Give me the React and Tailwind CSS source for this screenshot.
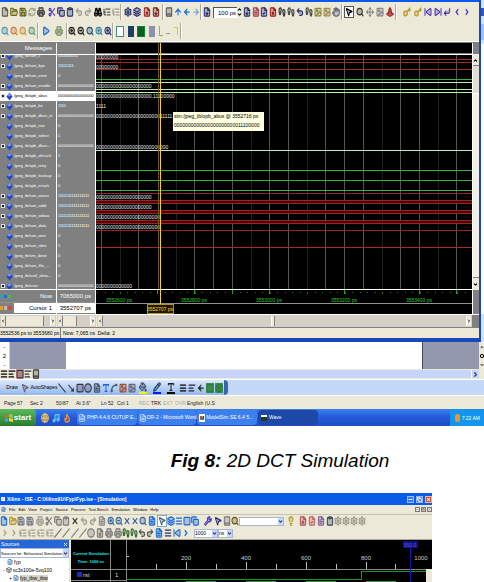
import {
  File, FolderOpen, Save, RefreshCw, Printer, Scissors, Copy, Clipboard, Undo2, Redo2, Binoculars, ListTree,
  Book, ArrowUp, ArrowLeft, ArrowRight, FileText, FileDown, FileX, FileCheck, Hand, MousePointer2, ZoomIn, ZoomOut,
  Search, Layers, TrafficCone, Key, ChevronLeft, ChevronRight, ChevronDown, ChevronUp, Circle, Square, Minus, X,
  Image, PaintBucket, Pencil, Menu, Type, Wrench, Lightbulb, Box, Move, Footprints, Globe, Flame, Music, Play,
  AlignLeft, Spline, SkipBack, SkipForward, CornerDownLeft, Slash, MoveDownRight, Settings,
} from "lucide-react";

const signals = [
  { name: "/jpeg_tb/ram_c", value: "000000000", expand: true },
  { name: "/jpeg_tb/ram_byn", value: "11111111", expand: true },
  { name: "/jpeg_tb/ram_error", value: "0" },
  { name: "/jpeg_tb/ram_enable", value: "0000000000000000", expand: true },
  { name: "/jpeg_tb/opb_abus", value: "0000000000000000", expand: true, selected: true },
  { name: "/jpeg_tb/opb_be", value: "1111", expand: true },
  { name: "/jpeg_tb/opb_dbus_in", value: "0000000000000000", expand: true },
  { name: "/jpeg_tb/opb_rnw", value: "0" },
  { name: "/jpeg_tb/opb_select", value: "1" },
  { name: "/jpeg_tb/opb_dbus...", value: "0000000000000000", expand: true },
  { name: "/jpeg_tb/opb_xferack", value: "1" },
  { name: "/jpeg_tb/opb_retry", value: "0" },
  { name: "/jpeg_tb/opb_toutsup", value: "0" },
  { name: "/jpeg_tb/opb_errack", value: "0" },
  { name: "/jpeg_tb/ram_waver", value: "1111111111111111", expand: true },
  { name: "/jpeg_tb/ram_addr", value: "1111111111111111", expand: true },
  { name: "/jpeg_tb/ram_wdata", value: "1111111111111111", expand: true },
  { name: "/jpeg_tb/ram_data", value: "1111111111111111", expand: true },
  { name: "/jpeg_tb/ram_wen", value: "0" },
  { name: "/jpeg_tb/ram_rden", value: "1" },
  { name: "/jpeg_tb/sim_done", value: "0" },
  { name: "/jpeg_tb/ram_fifo_...", value: "0" },
  { name: "/jpeg_tb/outif_almo...", value: "0" },
  { name: "/jpeg_tb/error", value: "0000000000000000", expand: true },
];

const gridLines = [101, 138, 194, 213, 232, 269, 288, 325, 344, 363, 400, 419, 456];
const dimLines = [120, 158, 176, 251, 307, 382, 438];

const waves = [
  [59, "#a52a2a"], [62, "#a52a2a"], [69, "#a52a2a"], [79, "#38b438"], [82, "#b8f0b0"], [89, "#b8f0b0"], [92, "#b8f0b0"],
  [150, "#c4ecc0"], [170, "#38b438"], [180, "#38b438"], [190, "#38b438"],
  [193, "#9c2424"], [200, "#9c2424"], [203, "#9c2424"], [210, "#9c2424"], [213, "#9c2424"], [220, "#9c2424"],
  [223, "#9c2424"], [230, "#9c2424"], [247, "#b02828"],
];

const buses = [
  [59, "00000000"], [69, "00000000"], [88, "00000000000000000000"], [98, "00000000000000000000.11100000"],
  [108, "1111"], [118, "0000000000000000000000011111"], [149, "00000000000000000000000000"], [199, "00000000000000000000"],
  [209, "00000000000000000000"], [219, "00000000000000000000000"], [229, "00000000000000000000000"], [288, "0000000000000"],
];

const labels = [
  [119, "3552600 ps"], [194, "3552800 ps"], [269, "3553000 ps"], [344, "3553200 ps"], [419, "3553400 ps"],
];

const Tools = ({ items, className }) => (
  <div className={`flex shrink-0 items-center justify-around ${className}`}>
    {items.map(([Icon, color], i) => (
      <button key={i} type="button" aria-label={`Tool ${i + 1}`} className={color}>
        <Icon className="w-2 h-[10px]" strokeWidth={3} fill="currentColor" fillOpacity={0.3} preserveAspectRatio="none" />
      </button>
    ))}
  </div>
);

const Sep = () => <div className="w-px h-4 shrink-0 bg-[#aca899] border-r border-white box-content" />;

const Select = ({ label, option, className }) => (
  <div className={`flex shrink-0 bg-white border border-[#a8b8d0] ${className}`}>
    <select aria-label={label} className="flex-1 min-w-0 leading-[7px]"><option>{option}</option></select>
    <span className="flex items-center w-[5px] bg-[#c6d5fb] text-[#335]"><ChevronDown className="size-[5px]" strokeWidth={5} /></span>
  </div>
);

const Waveform = () => (
  <svg className="block w-full h-[271px] bg-black" shapeRendering="crispEdges">
    <g transform="translate(-96 -43)">
      {gridLines.map((x) => <rect key={x} x={x} y="55" width="1" height="234" fill="#555" />)}
      {dimLines.map((x) => <rect key={x} x={x} y="55" width="1" height="234" fill="#1f1f1f" />)}
      {[200, 210, 220].map((y) => <rect key={y} x="96" y={y} width="120%" height="4" fill="#4a0808" />)}
      {waves.map(([y, color]) => <rect key={y} x="96" y={y} width="120%" height="1" fill={color} />)}
      {buses.map(([y, text]) => (
        <text key={y} x="96" y={y} fontSize="5" fill="#e4e4e4">{text}</text>
      ))}
      <rect x="96" y="53" width="120%" height="1" fill="#808080" />
      <rect x="96" y="54" width="120%" height="1" fill="#fff" />
      <rect x="96" y="289" width="120%" height="1" fill="#fff" />
      <rect x="96" y="303" width="120%" height="1" fill="#909090" />
      {Array.from({ length: 50 }, (_, i) => (
        <rect key={i} x={97 + i * 7.5} y="292" width="1" height={i % 5 === 3 ? 2 : 1} fill="#1c7a1c" />
      ))}
      {[157, 194, 232, 269, 344, 419, 456].map((x) => <rect key={x} x={x} y="290" width="1" height="4" fill="#22a022" />)}
      {labels.map(([x, text]) => (
        <text key={x} x={x} y="302" fontSize="5" textAnchor="middle" fill="#2cc82c">{text}</text>
      ))}
      <rect x="158" y="43" width="1" height="246" fill="#6b5a10" />
      <rect x="160" y="43" width="1" height="261" fill="#f0d040" />
      <rect x="147" y="304" width="26" height="9" fill="#201800" stroke="#b09020" />
      <text x="160" y="311" fontSize="5" textAnchor="middle" fill="#ffd83c">3552707 ps</text>
    </g>
  </svg>
);

const SignalName = ({ name, expand, selected }) => (
  <div className={`flex items-center h-[10px] ${selected ? "bg-white text-black" : "text-white"}`}>
    <span className="w-[6px] shrink-0 flex justify-center">
      {expand && <span className="w-1 h-1 bg-[#222] border border-[#ddd]" />}
    </span>
    <svg viewBox="0 0 8 10" className="w-[7px] h-[9px] shrink-0">
      <path d="M4 0.5 7.5 5 4 9.5 0.5 5z" fill="#1f47c8" />
      <path d="M4 0.5 6 3.5 3.5 5 1.5 4z" fill="#6f9cff" />
    </svg>
    <span className="pl-px whitespace-nowrap">{name}</span>
  </div>
);

const ScrollBar = ({ className, thumb }) => (
  <div className={`flex bg-[#d4d0c8] h-3 p-px ${className}`}>
    <button type="button" aria-label="Scroll left" className="w-[5px] bg-[#ece9d8] border-r border-[#808080]"><ChevronLeft className="w-1 h-2" strokeWidth={5} /></button>
    <div className={`bg-[#ece9d8] border-r border-[#808080] ${thumb}`} />
    <button type="button" aria-label="Scroll right" className="w-[5px] ml-auto bg-[#ece9d8] border-l border-white"><ChevronRight className="w-1 h-2" strokeWidth={5} /></button>
  </div>
);

const navy = "text-[#26306e]";
const gray = "text-[#a09d90]";
const blue = "text-[#1668d8]";
const gold = "text-[#b8961e]";
const purple = "text-[#4a34b8]";

const WaveWindow = () => (
  <div className="flex bg-[#d6e2fa]">
    <div className="flex-1 min-w-0 bg-[#ece9d8] border-r-2 border-b-4 border-[#1a48b8]">
      <div className="h-[2px] bg-[#0a5be8]" />
      <div className="flex items-center h-[19px] pt-px overflow-hidden">
        <Tools className="w-[45px]" items={[[File, "text-[#555]"], [FolderOpen, "text-[#6d6a10]"], [Save, "text-[#65651a]"], [RefreshCw, gray], [Printer, "text-[#333]"]]} />
        <Tools className="w-[46px] ml-[2px]" items={[[Scissors, purple], [Copy, navy], [Clipboard, navy], [Undo2, gray], [Redo2, gray]]} />
        <Tools className="w-[27px]" items={[[Binoculars, "text-black"], [ListTree, "text-[#555]"], [ListTree, gray]]} />
        <Sep />
        <Tools className="w-[38px] mx-px" items={[[Settings, navy], [Layers, navy], [FileX, "text-[#922]"], [FileDown, "text-[#722]"]]} />
        <Sep />
        <Tools className="w-[36px]" items={[[Book, "text-[#555]"], [ArrowUp, blue], [ArrowLeft, blue], [ArrowRight, "text-[#7aa4dc]"]]} />
        <Sep />
        <Tools className="w-[9px]" items={[[FileDown, navy]]} />
        <input aria-label="Run length" defaultValue="100 ps" className="w-[24px] h-[11px] ml-[2px] px-px bg-white border-t border-l border-[#555] text-right shrink-0" />
        <div className="flex flex-col w-[6px] shrink-0"><ChevronUp className="size-[5px]" strokeWidth={5} /><ChevronDown className="size-[5px]" strokeWidth={5} /></div>
        <Tools className="w-[34px]" items={[[FileDown, navy], [FileText, "text-[#a04050]"], [FileCheck, navy], [FileX, "text-[#a01818]"]]} />
        <Tools className="w-[64px]" items={[[Footprints, "text-[#333]"], [Footprints, "text-[#444]"], [Undo2, navy], [Footprints, "text-[#444]"], [Image, "text-[#8c8a3a]"], [Image, "text-[#a08a50]"], [Hand, "text-[#667]"]]} />
        <Sep />
        <Tools className="w-[52px]" items={[[MousePointer2, "bg-white border border-[#555] text-black"], [Search, "text-[#333]"], [Move, "text-[#888]"], [Image, "text-[#888]"], [TrafficCone, "text-[#a02020]"]]} />
        <Sep />
        <Tools className="w-[22px] ml-1" items={[[Key, gold], [Key, gold]]} />
        <Tools className="w-[49px]" items={[[SkipBack, purple], [SkipForward, purple], [CornerDownLeft, purple], [ChevronLeft, purple], [ChevronRight, purple]]} />
      </div>
      <div className="flex items-center h-[20px] overflow-hidden">
        <Tools className="w-[37px]" items={[[Search, "text-[#4c98b8]"], [Search, "text-[#d07a38]"], [Search, "text-[#c89838]"], [Search, "text-[#58a078]"]]} />
        <Sep />
        <Tools className="w-[27px]" items={[[Play, blue], [Printer, "text-[#789060]"]]} />
        <Sep />
        <Tools className="w-[44px]" items={[[ZoomIn, "text-[#222]"], [ZoomOut, "text-[#222]"], [Search, "text-[#205070]"], [ZoomIn, "text-[#3888a0]"], [ZoomIn, navy]]} />
        <Sep />
        <div className="flex items-center justify-around w-[66px]">
          <button type="button" aria-label="Literal" className="w-2 h-[11px] bg-white border border-[#438c80]" />
          <button type="button" aria-label="Logic" className="w-[6px] h-[11px] bg-[#203c60]" />
          <button type="button" aria-label="Event" className="w-2 h-[11px] bg-[#0c5c24] border border-[#083]" />
          <button type="button" aria-label="Analog" className="w-[6px] h-[11px] bg-[#8c90a8]" />
          <button type="button" aria-label="Step" className="w-1 h-[10px] border-l border-b border-[#a8a850]" />
          <button type="button" aria-label="Low" className="w-1 h-[6px] border-b border-[#999]" />
          <button type="button" aria-label="High" className="w-1 h-[8px] border-r border-t border-[#cccc40]" />
        </div>
        <Sep />
      </div>
      <div className="h-px bg-white" />
      <div className="h-px bg-[#808080]" />

      <div className="flex">
        <div className="w-[57px] shrink-0 bg-[#808080] border-r border-white text-white">
          <div className="h-[10px] pr-1 text-right">Messages</div>
          <div className="h-px bg-[#808080]" />
          <div className="h-px bg-white" />
          <div className="h-[234px] overflow-hidden text-[4px]">
            <div className="-mt-1">{signals.map((s) => <SignalName key={s.name} {...s} />)}</div>
          </div>
          <div className="flex items-center justify-between h-[14px] border-y border-b-[#909090] border-t-white pr-1">
            <span className="flex"><i className="size-[3px] bg-[#30a0c0]" /><i className="size-[3px] ml-px bg-[#3c60d0]" /><i className="size-[3px] ml-px bg-[#40c040]" /></span>
            <span>Now</span>
          </div>
          <div className="flex items-center h-[10px]">
            <span className="flex w-[14px]"><i className="w-[3px] h-1 bg-[#e0a020]" /><i className="w-[3px] h-1 ml-px bg-[#bbb]" /><i className="size-1 ml-px rounded-full bg-[#e04040]" /></span>
            <span className="flex-1 pr-1 text-right bg-white text-black">Cursor 1</span>
          </div>
        </div>
        <div className="w-[39px] shrink-0 bg-[#808080] border-r border-white text-white">
          <div className="h-[11px]" />
          <div className="h-px bg-white" />
          <div className="h-[234px] overflow-hidden text-[4px]">
            <div className="-mt-1">
              {signals.map((s) => (
                <div key={s.name} className={`h-[10px] pl-px ${s.selected ? "bg-white text-black" : ""}`}>{s.value}</div>
              ))}
            </div>
          </div>
          <div className="h-[14px] pr-1 pt-px text-right border-y border-t-white border-b-[#909090]">7065000 ps</div>
          <div className="h-[10px] pr-1 text-right bg-white text-black">3552707 ps</div>
        </div>
        <div className="relative flex-1 min-w-0">
          <Waveform />
          <div role="tooltip" className="absolute left-[77px] top-[69px] w-[91px] h-[19px] px-px bg-[#ffffe1] text-[5px] text-black whitespace-nowrap leading-[9px]">
            sim:/jpeg_tb/opb_abus @ 3552716 ps
            <br />
            0000000000000000000000011100000
          </div>
        </div>
        <div className="flex flex-col w-[7px] shrink-0 bg-[#f2f0e4] border-l border-white">
          <div className="h-[11px] bg-[#808080]" />
          <button type="button" aria-label="Scroll up" className="h-[11px] mt-px bg-[#ece9d8] border-b border-[#808080]"><ChevronUp className="size-[5px]" strokeWidth={5} /></button>
          <div className="h-[28px] bg-[#e2dfd0] border-b border-white" />
          <div className="flex-1" />
          <button type="button" aria-label="Scroll down" className="h-[13px] bg-[#ece9d8] border-t border-[#808080]"><ChevronDown className="size-[5px]" strokeWidth={5} /></button>
          <div className="h-6 bg-[#808080]" />
        </div>
      </div>
      <div className="flex border-t border-white">
        <ScrollBar className="w-[56px]" thumb="flex-1 mr-[6px]" />
        <ScrollBar className="w-[39px] ml-px" thumb="w-[14px]" />
        <ScrollBar className="flex-1 ml-px" thumb="w-1 ml-[45%] border-l border-l-white" />
        <div className="w-[7px] bg-[#808080]" />
      </div>
      <div className="flex items-center h-[11px] border-t border-[#808080] text-[5px]">
        <span className="w-[60px] whitespace-nowrap">3552536 ps to 3553680 ps</span>
        <span className="pl-[2px] border-l border-[#808080]">Now: 7,065 ns&nbsp; Delta: 2</span>
      </div>
    </div>
    <div className="w-[3px] shrink-0 pt-2">
      <div className="h-[8px] bg-[#2858c0]" />
      <div className="h-4 mt-2 bg-[#a8c0f0]" />
      <div className="h-[270px] mt-1 bg-white" />
    </div>
  </div>
);

const WordWindow = () => (
  <div className="bg-[#ece9d8]">
    <div className="flex h-[27px]">
      <div className="flex flex-col items-center justify-around w-[10px] bg-white border-r border-[#c0d0f0] leading-[8px]"><i>-</i><i>2</i><i>-</i></div>
      <div className="w-[56px] bg-[#9299ae]" />
      <div className="flex-1 bg-white border-r border-[#404860]" />
      <div className="w-[56px] bg-[#9299ae]" />
      <div className="flex flex-col items-center justify-around w-[5px]"><ChevronUp className="size-1" strokeWidth={6} /><Circle className="size-1" strokeWidth={6} /><ChevronDown className="size-1" strokeWidth={6} /></div>
    </div>
    <div className="flex items-center h-[10px]">
      <Tools className="w-[40px] h-[10px] overflow-hidden" items={[[Menu, "text-black"], [AlignLeft, "text-black"], [Square, "bg-[#f0a878] text-[#26306e]"], [AlignLeft, "text-[#333]"], [Book, "text-[#333]"], [ChevronLeft, blue]]} />
      <div className="flex-1 h-2 bg-[#c6d5fb]" />
      <button type="button" aria-label="Scroll right" className="w-2 h-2 bg-[#c6d5fb] border-l border-white text-[#335]"><ChevronRight className="size-[7px]" strokeWidth={4} /></button>
      <div className="w-[5px]" />
    </div>
    <div className="flex h-[17px] border-y border-white bg-[#c4d9f8]">
      <div className="flex items-center pl-1 bg-linear-to-b from-[#dce9fd] to-[#94b8ec] text-[5px]">
        <button type="button" className="w-4">Draw</button>
        <Tools className="w-[10px]" items={[[MousePointer2, "text-[#667]"]]} />
        <button type="button" className="w-[28px]">AutoShapes</button>
        <Tools className="w-[78px]" items={[[Slash, "text-[#334] -scale-x-100"], [MoveDownRight, "text-[#334]"], [Square, "text-[#334]"], [Circle, "text-[#334]"], [FileText, "text-[#456]"], [Type, blue], [Spline, "text-[#456]"], [Image, "text-[#a05030]"], [Image, "text-[#667]"]]} />
        <Tools className="w-[42px]" items={[[PaintBucket, "text-[#456] border-b-2 border-[#f4f000]"], [Pencil, "text-[#246] border-b-2 border-[#0020f0]"], [Type, "text-[#222] border-b-2 border-black"]]} />
        <Tools className="w-[46px]" items={[[Menu, "text-black"], [AlignLeft, "text-[#223]"], [ArrowLeft, "text-[#222]"], [Square, "bg-[#3c9850] text-[#2c7840]"], [Box, "bg-[#3c9850] text-[#2c7840]"]]} />
      </div>
      <div className="w-1 bg-[#3c66b4] rounded-r-sm" />
    </div>
    <div className="flex items-center h-[13px] whitespace-nowrap text-[#222] text-[5px]">
      <span className="w-[26px] pl-1">Page 57</span>
      <span className="w-[30px] pl-1">Sec 2</span>
      <span className="w-[20px]">50/87</span>
      <span className="w-[25px]">At 3.6"</span>
      <span className="w-4">Ln 52</span>
      <span className="w-[22px]">Col 1</span>
      <span className="w-[12px] text-[#aaa]">REC</span>
      <span className="w-[12px]">TRK</span>
      <span className="w-[12px] text-[#aaa]">EXT</span>
      <span className="w-[12px] text-[#aaa]">OVR</span>
      <span>English (U.S</span>
    </div>
    <div className="flex items-center h-[17px] bg-linear-to-b from-[#3a80f0] via-[#2458d8] to-[#1f4fc4] text-white text-[5px]">
      <button type="button" className="flex items-center justify-center gap-px w-9 h-full rounded-r bg-linear-to-b from-[#5cb85c] to-[#2c7c2c] text-[8px] font-bold">
        <svg viewBox="0 0 10 10" className="size-[8px]">
          <path d="M0 1 4 0V4L0 5z" fill="#f05a28" /><path d="M5 0 10 1V5L5 4z" fill="#8fd040" />
          <path d="M0 6 4 5V9L0 10z" fill="#48a0f0" /><path d="M5 5 10 6V10L5 9z" fill="#f8d030" />
        </svg>
        start
      </button>
      <Tools className="w-[32px] ml-1" items={[[Globe, "text-[#f4c050]"], [Music, "text-[#60d0f8]"], [Flame, "text-[#f09040]"]]} />
      <button type="button" className="flex items-center gap-px w-[60px] h-[15px] ml-[5px] pl-px whitespace-nowrap rounded-sm bg-[#3c80f0]"><FileText className="size-2 shrink-0" />PHP-4.4.6 CUTUP E...</button>
      <button type="button" className="flex items-center w-[58px] h-[15px] ml-px pl-px whitespace-nowrap rounded-sm bg-[#3c80f0]"><FileText className="size-2 shrink-0" />DR-2 - Microsoft Word</button>
      <button type="button" className="flex items-center gap-px w-[60px] h-[15px] ml-px pl-[2px] whitespace-nowrap rounded-sm bg-[#3c80f0]"><b className="px-px bg-white text-black leading-[8px]">M</b>ModelSim SE 6.4 5...</button>
      <button type="button" className="flex items-center gap-[2px] w-[60px] h-[15px] ml-px pl-[3px] rounded-sm bg-[#1c48a8]"><i className="size-[6px] bg-[#203c20] border-t-2 border-white" />Wave</button>
      <div className="flex items-center justify-end gap-[2px] w-[34px] h-full ml-auto pr-1 bg-[#1494ec] whitespace-nowrap"><i className="w-[5px] h-2 shrink-0 rounded-full bg-[#e89830]" />7:22 AM</div>
    </div>
  </div>
);

const times = [[186, "200"], [246, "400"], [306, "600"], [366, "800"], [421, "1000"]];

const IseWindow = () => (
  <div className="mr-[52px] bg-[#ece9d8]">
    <div className="flex items-center h-3 pl-px gap-[2px] bg-[#0a5ce8] text-white text-[5px] font-bold">
      <svg viewBox="0 0 8 8" className="size-1"><path d="M0 0H8V8H0z" fill="#fff" /><path d="M1 6 6 2" stroke="#c33" /></svg>
      <span className="flex-1">Xilinx - ISE - C:\Xilinx91i\Fyp\Fyp.ise - [Simulation]</span>
      <button type="button" aria-label="Minimize" className="bg-[#3c78f0] border border-[#9bf]"><Minus className="size-[5px]" strokeWidth={5} /></button>
      <button type="button" aria-label="Restore" className="bg-[#3c78f0] border border-[#9bf]"><Copy className="size-[5px]" strokeWidth={4} /></button>
      <button type="button" aria-label="Close" className="bg-[#d84828] border border-[#eba]"><X className="size-[5px]" strokeWidth={5} /></button>
    </div>
    <div className="flex items-center gap-[3px] h-[10px] pl-px border-b border-[#c8c4b0] text-[4px]">
      <FileText className="size-[5px] text-[#3060c0]" strokeWidth={3} />
      {["File", "Edit", "View", "Project", "Source", "Process", "Test Bench", "Simulation", "Window", "Help"].map((m) => (
        <button key={m} type="button">{m}</button>
      ))}
      <div className="flex gap-px ml-auto"><Minus className="size-[5px] border border-[#778]" /><Copy className="size-[5px] border border-[#778]" /><X className="size-[5px] border border-[#778]" /></div>
    </div>
    <div className="flex items-center h-3">
      <Tools className="w-[34px]" items={[[File, blue], [FolderOpen, gold], [Save, "text-[#778]"], [Save, "text-[#778]"]]} />
      <Tools className="w-[11px]" items={[[Printer, gray]]} />
      <Tools className="w-[34px]" items={[[Scissors, "text-[#777]"], [Copy, "text-[#777]"], [Clipboard, "text-[#777]"], [X, "text-[#333]"]]} />
      <Tools className="w-[28px]" items={[[Undo2, gray], [Redo2, gray], [FileText, "text-[#888]"]]} />
      <Tools className="w-[40px]" items={[[ZoomIn, "text-[#4068a0]"], [ZoomOut, "text-[#4068a0]"], [X, "text-[#4068a0]"], [X, "text-[#4068a0]"], [Search, "text-[#406090]"]]} />
      <Tools className="w-[20px]" items={[[FileText, blue], [MousePointer2, "bg-white border border-[#8ab] text-[#467]"]]} />
      <Tools className="w-[32px]" items={[[Layers, blue], [Menu, blue], [Square, blue], [Copy, blue]]} />
      <Tools className="w-[20px] ml-1" items={[[Wrench, purple], [MousePointer2, navy]]} />
      <Tools className="w-[16px]" items={[[Book, "text-[#777]"], [Search, "text-[#665510]"]]} />
      <Select label="Search" className="w-[45px] h-[9px]" />
      <Tools className="w-[14px]" items={[[Lightbulb, gold]]} />
      <Tools className="w-[28px]" items={[[FileX, "text-[#b05050]"], [FileCheck, "text-[#c06060]"], [FileText, "text-[#8060a0]"]]} />
      <Tools className="w-[40px]" items={[[Clipboard, "text-[#345]"], [Settings, gray], [Settings, gray], [Settings, gray], [Settings, gray]]} />
    </div>
    <div className="flex items-center h-[13px] border-b border-[#aca899]">
      <Tools className="w-[18px]" items={[[ChevronRight, gray], [ChevronRight, gray]]} />
      <Tools className="w-[36px]" items={[[ListTree, gray], [ListTree, gray], [ListTree, gray], [ListTree, gray]]} />
      <Tools className="w-[50px]" items={[[Slash, "text-[#666]"], [Slash, "text-[#777]"], [Slash, "text-[#777]"], [Slash, "text-[#777]"], [Circle, "text-[#777]"], [FileX, "text-[#777]"]]} />
      <Tools className="w-[18px]" items={[[Printer, "text-[#777]"], [Printer, "text-[#777]"]]} />
      <Tools className="w-[32px]" items={[[Footprints, "text-[#286828]"], [Footprints, "text-[#386838]"], [Undo2, "text-[#555]"], [Redo2, "text-[#555]"]]} />
      <Tools className="w-[36px]" items={[[FileText, blue], [Menu, navy], [SkipBack, blue], [ChevronRight, blue]]} />
      <Select label="Run time" option="1000" className="w-[24px] h-[9px] ml-1 text-[5px]" />
      <Select label="Time unit" option="ns" className="w-[15px] h-[9px] text-[5px]" />
    </div>
    <div className="flex h-[42px] overflow-hidden">
      <div className="w-[69px] shrink-0 bg-white whitespace-nowrap text-[5px]">
        <div className="flex items-center justify-between h-2 px-px bg-[#2468d8] text-white"><span>Sources</span><X className="size-[5px]" strokeWidth={4} /></div>
        <Select label="Source view" option="Sources for: Behavioral Simulation" className="w-full h-[10px] text-[4px]" />
        <ul className="pl-[3px]">
          <li className="flex items-center h-2 gap-px pl-1"><FileText className="size-[6px] text-[#3878b0]" strokeWidth={3} />fyp</li>
          <li className="flex items-center h-2 gap-px"><span>-</span><Box className="size-[6px] text-[#444]" strokeWidth={3} />xc3s100e-5vq100</li>
          <li className="flex items-center h-2 gap-px pl-[6px] leading-[7px]"><span>+</span><FileText className="size-[6px] text-[#3878b0]" strokeWidth={3} /><span className="bg-[#d8d4c8]">fyp_tbw_tbw</span></li>
        </ul>
      </div>
      <svg className="flex-1 min-w-0 h-[42px] bg-black border-l-2 border-[#ece9d8]" shapeRendering="crispEdges">
        <g transform="translate(-71 -540)">
          <text x="91" y="555" fontSize="4" fontWeight="bold" textAnchor="middle" fill="#20e8e8">Current Simulation</text>
          <text x="91" y="563" fontSize="4" fontWeight="bold" textAnchor="middle" fill="#20e8e8">Time: 1000 ns</text>
          <path d="M110.500 540V582M126.500 540V582M71 569.500H427M71 580.500H126" stroke="#888" fill="none" />
          <path d="M127 556.500H129M156.500 564V569M186.500 562V569M216.500 564V569M246.500 562V569M276.500 564V569M306.500 562V569M336.500 564V569M366.500 562V569M395.500 564V569" stroke="#bbb" fill="none" />
          {times.map(([x, t]) => <text key={x} x={x} y="560" fontSize="6" textAnchor="middle" fill="#ccc">{t}</text>)}
          <path d="M127 579.500H361.500V571.500H426" stroke="#1c9428" fill="none" />
          <path d="M186 581.500H216M246 581.500H276M306 581.500H336M366 581.500H396" stroke="#2c9c38" fill="none" />
          <path d="M410.500 548V582" stroke="#1818b0" />
          <rect x="403" y="541" width="15" height="7" fill="#10107c" />
          <text x="410" y="547" fontSize="5" textAnchor="middle" fill="#5858ff">950.0</text>
          <rect x="77" y="572" width="5" height="5" fill="#2028d0" />
          <text x="83" y="577" fontSize="6" fill="#ddd">rst</text>
          <text x="115" y="577" fontSize="6" fill="#ddd">1</text>
          <rect x="426" y="569" width="6" height="13" fill="#ece9d8" />
        </g>
      </svg>
    </div>
  </div>
);

export default function App() {
  return (
    <main className="w-full overflow-hidden bg-white text-black font-['Liberation_Sans',Arial,sans-serif] text-[6px] leading-[10px] [&_button]:leading-none [&_select]:appearance-none [&_i]:not-italic">
      <WaveWindow />
      <WordWindow />
      <p className="mt-[20px] mb-[18px] pl-[76px] text-center text-[19px] leading-[29px] italic">
        <strong>Fig 8:</strong> 2D DCT Simulation
      </p>
      <IseWindow />
    </main>
  );
}
